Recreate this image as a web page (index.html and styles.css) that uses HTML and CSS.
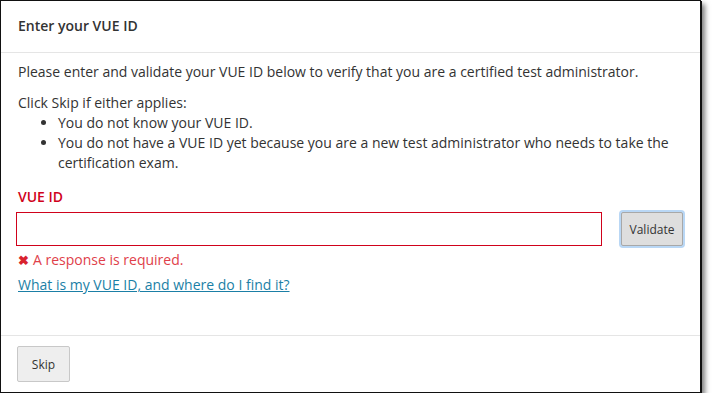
FILE: index.html
```html
<!DOCTYPE html>
<html lang="en">
<head>
<meta charset="utf-8">
<title>Enter your VUE ID</title>
<link rel="stylesheet" href="styles.css">
</head>
<body>
<div class="dialog">
  <div class="dialog-header">Enter your VUE ID</div>
  <div class="dialog-body">
    <p class="intro">Please enter and validate your VUE ID below to verify that you are a certified test administrator.</p>
    <p class="skip-note">Click Skip if either applies:</p>
    <ul class="reasons">
      <li>You do not know your VUE ID.</li>
      <li>You do not have a VUE ID yet because you are a new test administrator who needs to take the certification exam.</li>
    </ul>
    <label class="field-label" for="vue-id">VUE ID</label>
    <div class="field-row">
      <input id="vue-id" class="field-input" type="text">
      <button class="btn btn-validate" type="button">Validate</button>
    </div>
    <div class="field-error"><span class="error-icon">&#10006;</span>A response is required.</div>
    <a class="help-link" href="#">What is my VUE ID, and where do I find it?</a>
  </div>
  <div class="dialog-footer">
    <button class="btn btn-skip" type="button">Skip</button>
  </div>
</div>
</body>
</html>
```

FILE: styles.css
```css
html, body {
  margin: 0;
  padding: 0;
  background: #fff;
}
body {
  font-family: "Open Sans", "Noto Sans", sans-serif;
  color: #333;
  font-size: 14px;
  line-height: 20px;
}
.dialog {
  box-sizing: border-box;
  width: 701px;
  height: 393px;
  border: 1px solid #111;
  box-shadow: 1px 1px 0 #111, 4px 4px 5px rgba(0, 0, 0, 0.5);
  background: #fff;
  display: flex;
  flex-direction: column;
}
.dialog-header {
  padding: 15px 17px 16px;
  font-size: 14px;
  font-weight: 600;
  line-height: 20px;
  color: #333;
  border-bottom: 1px solid #e5e5e5;
}
.dialog-body {
  flex: 1;
  padding: 9px 16px 0 15px;
}
.intro {
  margin: 0 0 11px 2px;
}
.skip-note {
  margin: 0 0 0 2px;
}
.reasons {
  margin: 0 0 14px 0;
  padding-left: 42px;
}
.field-label {
  display: block;
  font-weight: 600;
  color: #d0021b;
  font-size: 14px;
  line-height: 20px;
  margin-left: 2px;
}
.field-row {
  display: flex;
  align-items: flex-start;
  gap: 19px;
  margin-top: 5px;
}
.field-input {
  box-sizing: border-box;
  width: 586px;
  height: 34px;
  border: 1px solid #d0021b;
  border-radius: 0;
  padding: 0 8px;
  font: inherit;
  outline: none;
}
.btn {
  font-family: "Open Sans", "Noto Sans", sans-serif;
  font-size: 12px;
  color: #333;
  cursor: pointer;
}
.btn-validate {
  box-sizing: border-box;
  width: 62px;
  height: 34px;
  background: #dedede;
  border: 1px solid #a8a8a8;
  border-radius: 2px;
  box-shadow: 0 0 0 2px #b9d7f5;
  padding: 0;
}
.field-error {
  margin-top: 4px;
  color: #e0404a;
  margin-left: 2px;
}
.error-icon {
  font-size: 13px;
  color: #d9232e;
  font-weight: 700;
  margin-right: 4px;
}
.help-link {
  display: inline-block;
  margin-top: 5px;
  margin-left: 2px;
  color: #1b7fa6;
  text-decoration: underline;
}
.dialog-footer {
  border-top: 1px solid #e5e5e5;
  padding: 10px 16px 10px;
}
.btn-skip {
  box-sizing: border-box;
  width: 53px;
  height: 36px;
  background: #eeeeee;
  border: 1px solid #c8c8c8;
  border-radius: 2px;
  padding: 0;
}
```
